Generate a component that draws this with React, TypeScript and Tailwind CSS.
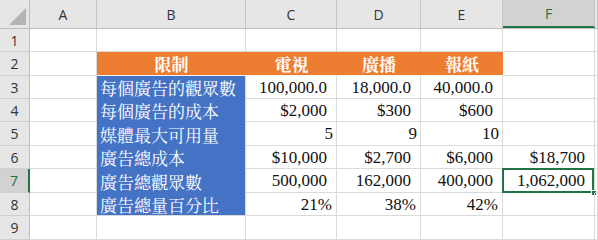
import React from "react";

type Cell = { t?: string; kind?: "orange" | "blue" | "num" | "int" | "pct" | "empty"; sel?: boolean };

const rows: { h: string; cells: Cell[] }[] = [
  { h: "h-[23px]", cells: [{}, {}, {}, {}, {}, {}, {}] },
  {
    h: "h-[24px]",
    cells: [{}, { t: "限制", kind: "orange" }, { t: "電視", kind: "orange" }, { t: "廣播", kind: "orange" }, { t: "報紙", kind: "orange" }, {}, {}],
  },
  {
    h: "h-[23px]",
    cells: [{}, { t: "每個廣告的觀眾數", kind: "blue" }, { t: "100,000.0", kind: "num" }, { t: "18,000.0", kind: "num" }, { t: "40,000.0", kind: "num" }, {}, {}],
  },
  {
    h: "h-[23px]",
    cells: [{}, { t: "每個廣告的成本", kind: "blue" }, { t: "$2,000", kind: "num" }, { t: "$300", kind: "num" }, { t: "$600", kind: "num" }, {}, {}],
  },
  {
    h: "h-[24px]",
    cells: [{}, { t: "媒體最大可用量", kind: "blue" }, { t: "5", kind: "int" }, { t: "9", kind: "int" }, { t: "10", kind: "int" }, {}, {}],
  },
  {
    h: "h-[23px]",
    cells: [{}, { t: "廣告總成本", kind: "blue" }, { t: "$10,000", kind: "num" }, { t: "$2,700", kind: "num" }, { t: "$6,000", kind: "num" }, { t: "$18,700", kind: "num" }, {}],
  },
  {
    h: "h-[24px]",
    cells: [{}, { t: "廣告總觀眾數", kind: "blue" }, { t: "500,000", kind: "num" }, { t: "162,000", kind: "num" }, { t: "400,000", kind: "num" }, { t: "1,062,000", kind: "num", sel: true }, {}],
  },
  {
    h: "h-[23px]",
    cells: [{}, { t: "廣告總量百分比", kind: "blue" }, { t: "21%", kind: "pct" }, { t: "38%", kind: "pct" }, { t: "42%", kind: "pct" }, {}, {}],
  },
  { h: "h-[24px]", cells: [{}, {}, {}, {}, {}, {}, {}] },
];

const colW = ["w-[67px]", "w-[149px]", "w-[91px]", "w-[84px]", "w-[82px]", "w-[92px]", "flex-1"];
const colLetters = ["A", "B", "C", "D", "E", "F", ""];

function CellView({ c, w, rowIdx }: { c: Cell; w: string; rowIdx: number }) {
  const base = `${w} shrink-0 h-full flex items-center text-[17px] leading-none relative`;
  if (c.kind === "orange") {
    return (
      <div className={`${base} justify-center bg-[#ed7d31] text-white font-bold border-b border-b-[#f3f3f3] font-['Noto_Serif_CJK_TC','Noto_Serif_TC',serif]`}>
        <span className="pb-[1px]">{c.t}</span>
      </div>
    );
  }
  if (c.kind === "blue") {
    const last = rowIdx === 7;
    return (
      <div
        className={`${base} bg-[#4472c4] text-white pl-[3px] border-r border-r-[#dadada] font-['Noto_Serif_CJK_TC','Noto_Serif_TC',serif] ${
          last ? "border-b border-b-[#dadada]" : ""
        }`}
      >
        <span>{c.t}</span>
      </div>
    );
  }
  const pad = c.kind === "num" ? "pr-[9px]" : c.kind === "int" ? "pr-[3px]" : c.kind === "pct" ? "pr-[4px]" : "";
  return (
    <div className={`${base} justify-end ${pad} text-[#111] border-r border-b border-[#dadada] font-['Liberation_Serif',serif]`}>
      <span>{c.t}</span>
      {c.sel && (
        <>
          <div className="absolute left-[-1px] top-[-1px] right-[0px] bottom-[-1px] border-2 border-[#217346]" />
          <div className="absolute right-[-3px] bottom-[-4px] w-[6px] h-[6px] bg-[#217346] border border-white" />
        </>
      )}
    </div>
  );
}

export default function App() {
  return (
    <div className="w-[598px] h-[240px] overflow-hidden bg-white flex flex-col">
      {/* column header */}
      <div className="h-[29px] flex shrink-0 bg-[#e6e6e6] border-b border-[#bdbdbd] font-['Open_Sans','Liberation_Sans',sans-serif]">
        <div className="w-[30px] shrink-0 h-full border-r border-[#bdbdbd] flex items-end justify-end pr-[2px] pb-[2px]">
          <svg width="18" height="18" viewBox="0 0 18 18">
            <polygon points="17,0 17,17 0,17" fill="#b4b4b4" />
          </svg>
        </div>
        {colLetters.map((l, i) => {
          const selected = l === "F";
          return (
            <div
              key={i}
              className={`${colW[i]} shrink-0 h-full flex items-center justify-center text-[14px] border-r border-[#c6c6c6] ${
                selected ? "bg-[#d2d2d2] text-[#217346] border-b-2 border-b-[#217346]" : "text-[#333]"
              }`}
            >
              {l}
            </div>
          );
        })}
      </div>
      {rows.map((r, ri) => {
        const selRow = ri === 6;
        return (
          <div key={ri} className={`${r.h} flex shrink-0`}>
            <div
              className={`w-[30px] shrink-0 h-full flex items-center justify-center text-[14px] border-b border-[#d0d0d0] font-['Open_Sans','Liberation_Sans',sans-serif] ${
                selRow ? "bg-[#d2d2d2] text-[#217346] border-r-2 border-r-[#217346]" : "bg-[#e6e6e6] text-[#333] border-r border-r-[#bdbdbd]"
              }`}
            >
              {ri + 1}
            </div>
            {r.cells.map((c, ci) => (
              <CellView key={ci} c={c} w={colW[ci]} rowIdx={ri} />
            ))}
          </div>
        );
      })}
    </div>
  );
}
